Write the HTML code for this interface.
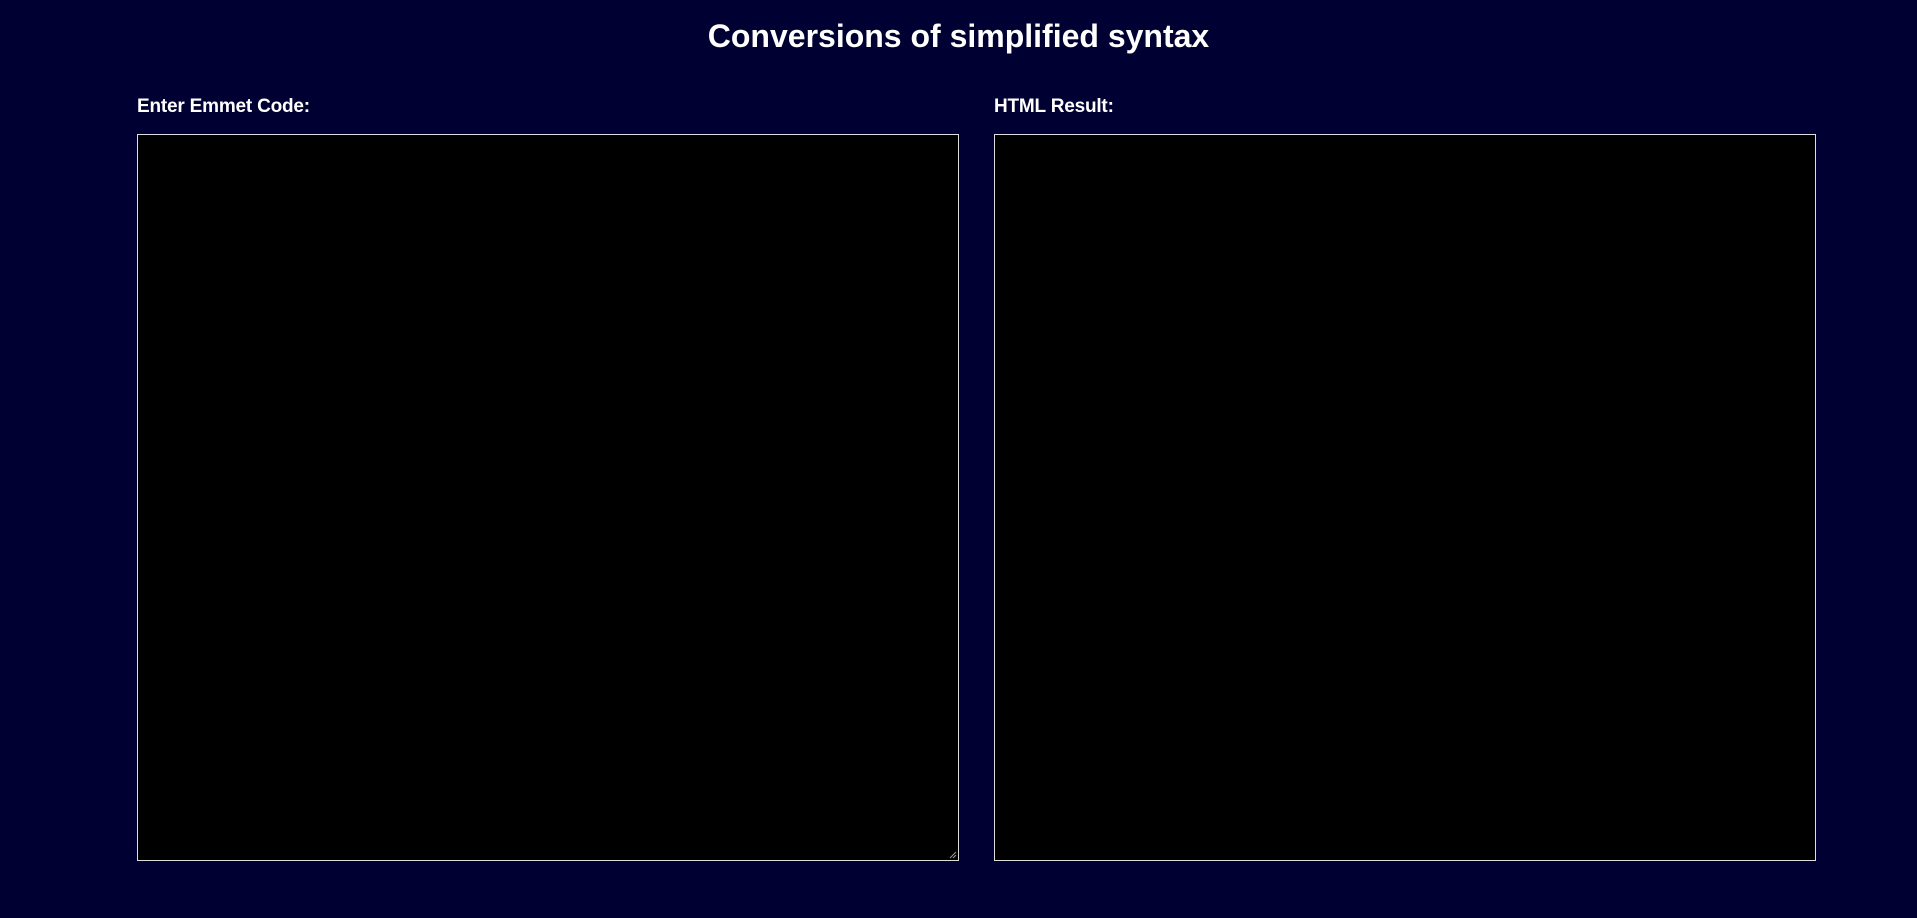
<!DOCTYPE html>
<html><head><style>
html,body{margin:0;padding:0;background:#010033;width:1917px;height:918px;overflow:hidden;font-family:"Liberation Sans",Arial,sans-serif;color:#fff}
h1{position:absolute;top:16px;left:0;width:1917px;margin:0;text-align:center;font-size:32px;font-weight:bold;line-height:40px}
.l{position:absolute;top:96px;font-size:19px;font-weight:bold;line-height:22px;letter-spacing:-0.2px}
.b{position:absolute;top:134px;height:727px;background:#000;border:1px solid #ddd;box-sizing:border-box}
</style></head><body>
<h1>Conversions of simplified syntax</h1>
<div class="l" style="left:137px">Enter Emmet Code:</div>
<div class="l" style="left:994px">HTML Result:</div>
<div class="b" style="left:137px;width:822px">
<svg style="position:absolute;right:1px;bottom:1px" width="9" height="9"><path d="M8 2L2 8M8 5L5 8" stroke="#999" stroke-width="1"/></svg>
</div>
<div class="b" style="left:994px;width:822px"></div>
</body></html>
